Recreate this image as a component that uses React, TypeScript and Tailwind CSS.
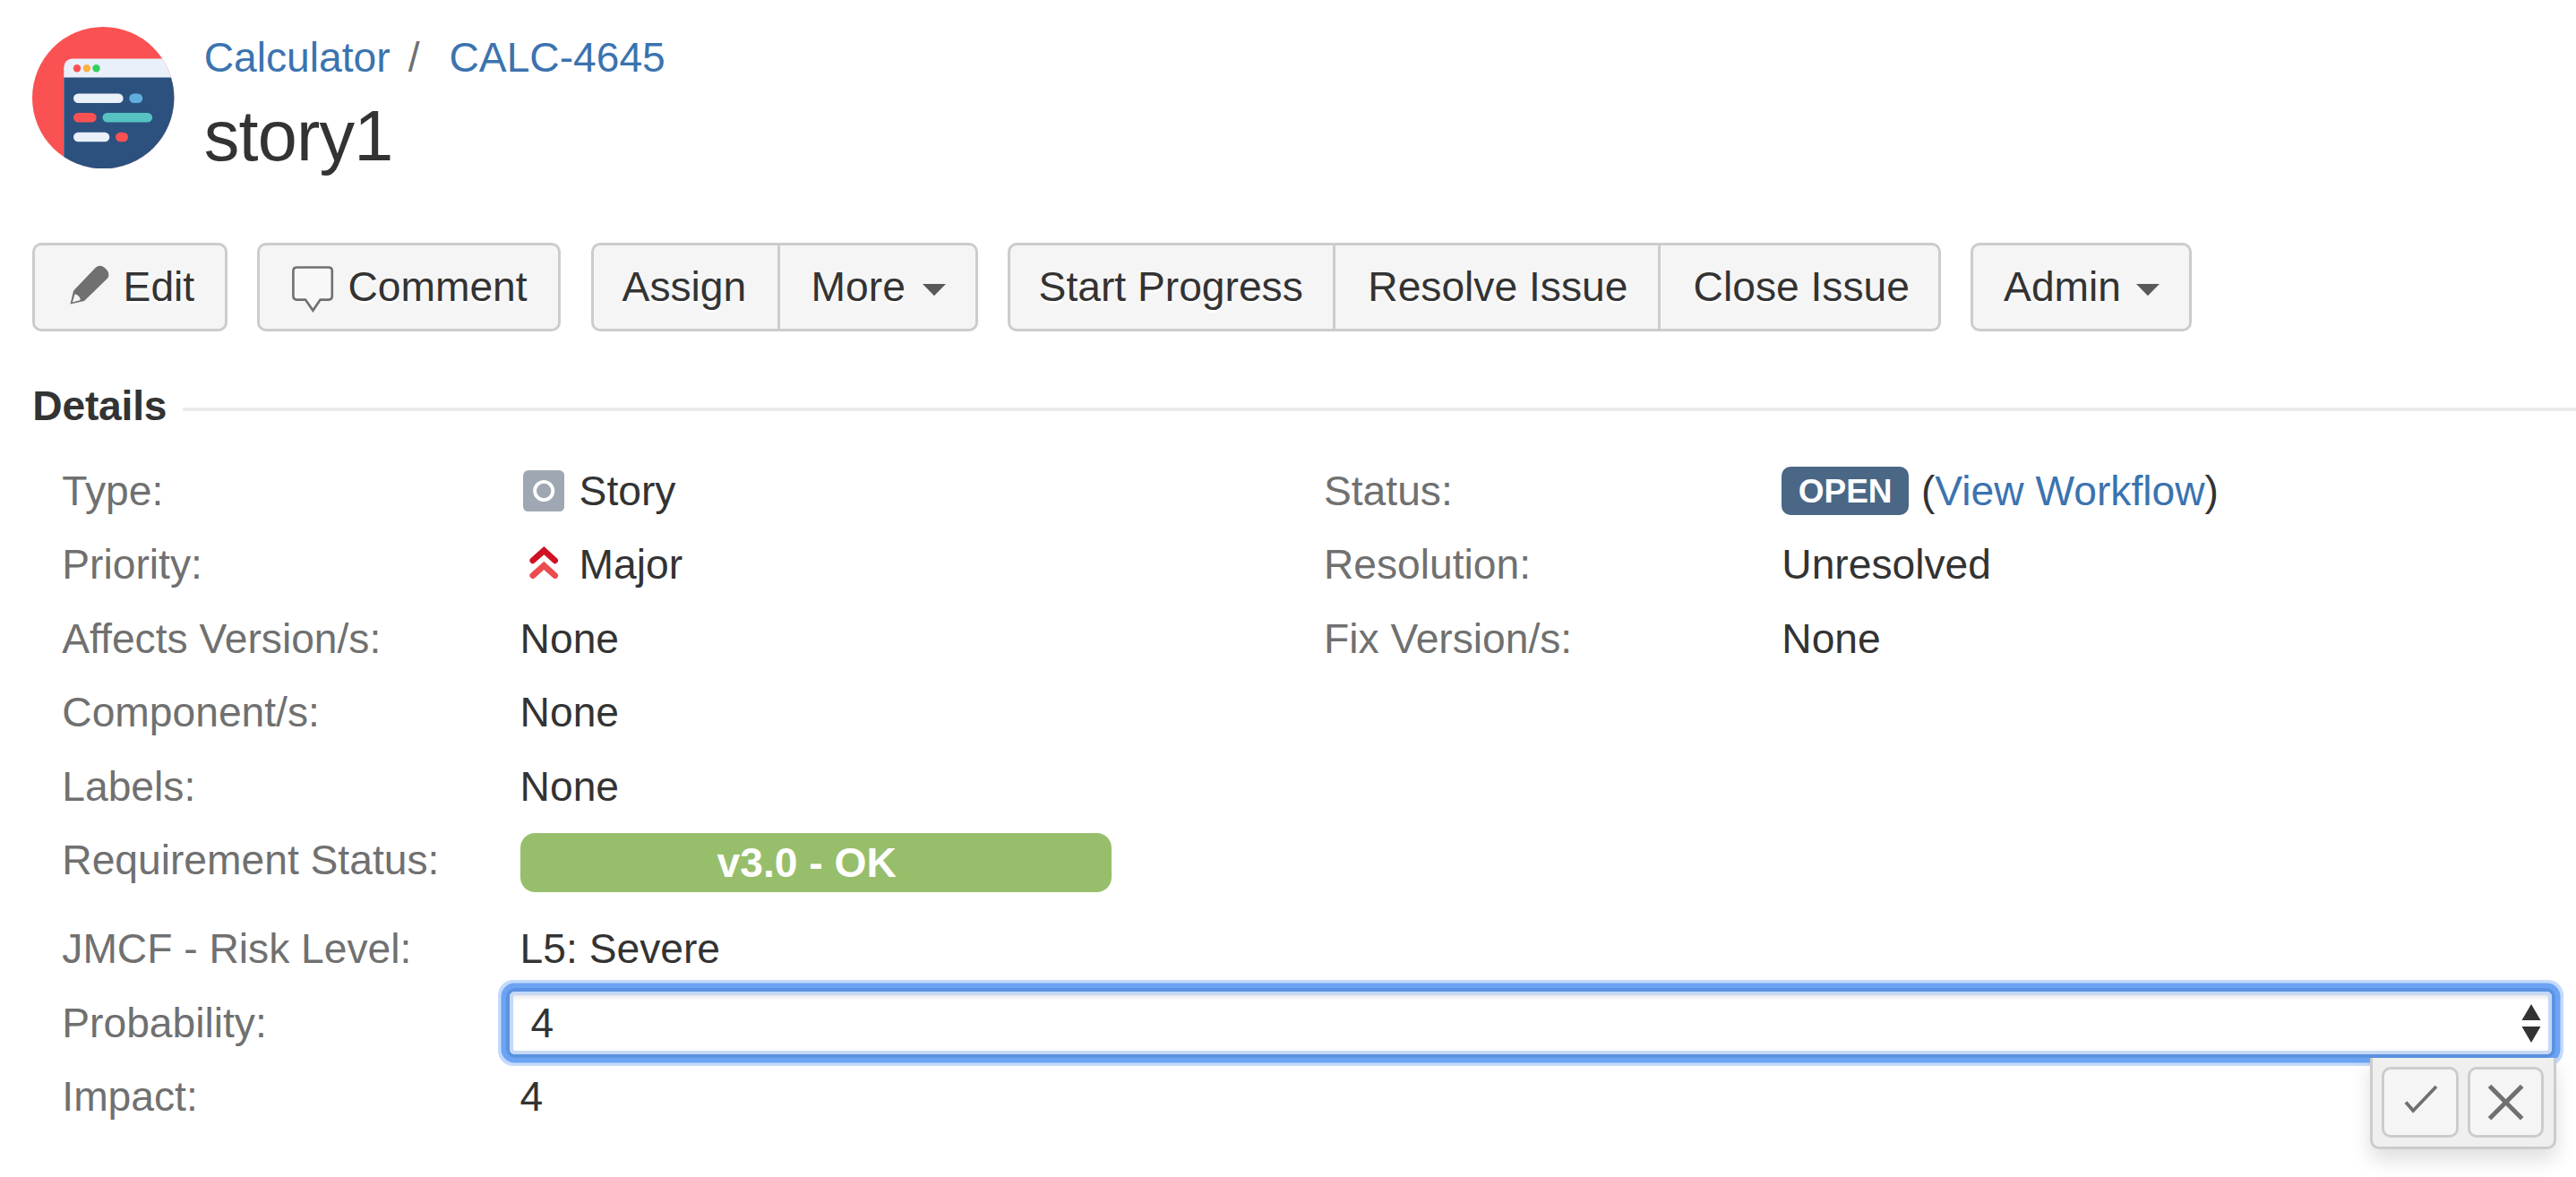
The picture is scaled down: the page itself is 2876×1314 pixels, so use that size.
import React from "react";

const Avatar = () => (
  <svg className="size-[158.4px] shrink-0" viewBox="0 0 158.4 158.4">
    <defs>
      <clipPath id="avatar-clip">
        <circle cx="79.2" cy="79.2" r="79.2" />
      </clipPath>
    </defs>
    <g clipPath="url(#avatar-clip)">
      <rect width="159" height="159" fill="#fa5252" />
      <path d="M35.3 159V45a9.5 9.5 0 0 1 9.5-9.5H160V159z" fill="#e9f0f9" />
      <rect x="35.3" y="56.5" width="125" height="104" fill="#2c517e" />
      <circle cx="50" cy="46.3" r="4.2" fill="#fa5252" />
      <circle cx="60.9" cy="46.3" r="4.2" fill="#fdb142" />
      <circle cx="71.5" cy="46.3" r="4.2" fill="#33d060" />
      <rect x="46" y="74.5" width="55.6" height="10.6" rx="5.3" fill="#e9f0f9" />
      <rect x="108.3" y="74.5" width="15" height="10.6" rx="5.3" fill="#61aede" />
      <rect x="46" y="96" width="25.7" height="10.6" rx="5.3" fill="#fa5252" />
      <rect x="78.5" y="96" width="55.6" height="10.6" rx="5.3" fill="#56c2c1" />
      <rect x="46" y="117.7" width="40.3" height="10.6" rx="5.3" fill="#e9f0f9" />
      <rect x="93" y="117.7" width="14" height="10.6" rx="5.3" fill="#fa5252" />
    </g>
  </svg>
);

const PencilIcon = () => (
  <svg className="mr-[12.5px] size-[52.8px] shrink-0" viewBox="0 0 52.8 52.8" fill="none">
    <path
      fill="#707070"
      fillRule="evenodd"
      d="M6.5 45.6L10.1 30.5L34.7 4.8Q39.7 0.8 45 5Q51.5 10.5 48.3 16.6L22 41.9L6.5 45.6ZM8.8 43.4L17.8 41Q17.3 36 11.6 34.2Z"
    />
  </svg>
);

const CommentIcon = () => (
  <svg
    className="mr-[12.5px] size-[52.8px] shrink-0 overflow-visible"
    viewBox="0 0 52.8 52.8"
    fill="none"
  >
    <path
      d="M8.4 4.5H43.8Q47.8 4.5 47.8 8.5V36.6Q47.8 40.6 43.8 40.6H34.6L26.4 52.6L18 40.6H8.4Q4.4 40.6 4.4 36.6V8.5Q4.4 4.5 8.4 4.5Z"
      stroke="#707070"
      strokeWidth="2.6"
      fill="#f8f8f8"
    />
  </svg>
);

const Caret = () => (
  <svg className="mt-[6px] h-[13.2px] w-[26px] shrink-0" viewBox="0 0 26 13.2">
    <path d="M0 0H26L13 13.2Z" fill="#595959" />
  </svg>
);

const cell =
  "flex h-full items-center whitespace-nowrap [text-shadow:0_3px_0_#fff]";
const group =
  "flex h-[99px] shrink-0 rounded-[10px] border-[3.3px] border-[#ccc] bg-[#f5f5f5]";

const Row = ({
  label,
  children,
  tall,
}: {
  label: string;
  children?: React.ReactNode;
  tall?: boolean;
}) => (
  <div className={tall ? "flex h-[99px] items-start" : "flex h-[82.5px] items-start"}>
    <div className="w-[511.3px] shrink-0 whitespace-nowrap leading-[82.5px] text-[#707070]">
      {label}
    </div>
    <div className="flex h-[82.5px] min-w-0 flex-1 items-center whitespace-nowrap leading-[82.5px]">
      {children}
    </div>
  </div>
);

const StoryIcon = () => (
  <svg className="ml-[3.3px] mr-[16.5px] size-[46.2px] shrink-0" viewBox="0 0 46.2 46.2">
    <rect width="46.2" height="46.2" rx="6" fill="#9fa8b2" />
    <circle cx="23.2" cy="23" r="10.1" fill="none" stroke="#fff" strokeWidth="3.8" />
  </svg>
);

const MajorIcon = () => (
  <svg
    className="mr-[13.2px] size-[52.8px] shrink-0"
    viewBox="0 0 52.8 52.8"
    fill="none"
    strokeWidth="6.8"
    strokeLinecap="round"
  >
    <path d="M13.8 21.8L26.3 10.6L38.6 21.8" stroke="#cf1124" />
    <path d="M13.8 38.6L26.3 27.4L38.6 38.6" stroke="#ea4c50" />
  </svg>
);

const iconButton =
  "flex h-[79px] w-[85.6px] items-center justify-center rounded-[10px] border-[3.3px] border-[#ccc] bg-[#f5f5f5]";

const Probability = () => (
  <div className="relative -ml-[11.6px] flex h-[70px] w-[2279.7px] shrink-0 items-center justify-between rounded-[6px] bg-white pl-[23.5px] pr-[11.7px] leading-none shadow-[inset_0_0_0_4px_#c5d9f6,inset_0_5px_6px_#ddd,0_0_0_4px_#5b92e2,0_0_0_9.5px_#6ca4f3,0_0_0_13px_#c5dafa]">
    <span>4</span>
    <svg className="h-[43px] w-[22px]" viewBox="0 0 22 43" fill="#333">
      <path d="M11 0L21.5 18H.5zM11 43L21.5 25H.5z" />
    </svg>
    <div className="absolute right-[-5px] top-[74px] flex h-[102px] w-[207.7px] gap-[10px] rounded-b-[10px] border-[3.3px] border-t-0 border-[#ccc] bg-[#efefef] pl-[10px] pt-[10px] shadow-[0_12px_22px_rgba(0,0,0,0.13)]">
      <div className={iconButton}>
        <svg className="size-[52.8px]" viewBox="0 0 52.8 52.8" fill="none" stroke="#707070" strokeWidth="3.8">
          <path d="M11 26.5L19.2 36L45 9" />
        </svg>
      </div>
      <div className={iconButton}>
        <svg className="size-[52.8px]" viewBox="0 0 52.8 52.8" fill="none" stroke="#707070" strokeWidth="5">
          <path d="M8.5 8.5L44.7 44.7M44.7 8.5L8.5 44.7" />
        </svg>
      </div>
    </div>
  </div>
);

export default function App() {
  return (
    <main className="h-[1314px] w-[2876px] overflow-hidden bg-white font-['Liberation_Sans',Arial,sans-serif] text-[46.2px] leading-none text-[#333]">
      <header className="flex h-[271px] pl-[36.3px] pt-[30px]">
        <Avatar />
        <div className="ml-[33px]">
          <nav className="flex h-[68px] items-center whitespace-nowrap text-[#3b73af]">
            <span>Calculator</span>
            <span className="ml-[20px] text-[#707070]">/</span>
            <span className="ml-[33px]">CALC-4645</span>
          </nav>
          <h1 className="h-[108px] text-[79.2px] leading-[108px] tracking-[-0.01em]">story1</h1>
        </div>
      </header>

      <div className="flex pl-[36.3px]">
        <div className={group + " w-[217.8px] pl-[33px]"}>
          <div className={cell}>
            <PencilIcon />
            Edit
          </div>
        </div>
        <div className={group + " ml-[33px] w-[339px] pl-[33px]"}>
          <div className={cell}>
            <CommentIcon />
            Comment
          </div>
        </div>
        <div className={group + " ml-[33.5px] w-[432px]"}>
          <div className={cell + " w-[208px] border-r-[3.3px] border-[#ccc] pl-[32px]"}>Assign</div>
          <div className={cell + " gap-[19px] pl-[35px]"}>
            More
            <Caret />
          </div>
        </div>
        <div className={group + " ml-[33px] w-[1042px]"}>
          <div className={cell + " w-[363px] border-r-[3.3px] border-[#ccc] pl-[32px]"}>
            Start Progress
          </div>
          <div className={cell + " w-[363.5px] border-r-[3.3px] border-[#ccc] pl-[36.7px]"}>
            Resolve Issue
          </div>
          <div className={cell + " pl-[36.5px]"}>Close Issue</div>
        </div>
        <div className={group + " ml-[33.5px] w-[247px] pl-[34px]"}>
          <div className={cell + " gap-[16.5px]"}>
            Admin
            <Caret />
          </div>
        </div>
      </div>

      <section>
        <div className="flex h-[136.8px] items-start pl-[36.3px] pt-[53px]">
          <h2 className="w-[168px] text-[46.2px] font-bold leading-[60px] tracking-[-0.2px]">Details</h2>
          <div className="mt-[32px] h-[4px] flex-1 bg-[#ebebeb]" />
        </div>
        <div className="flex pl-[69.3px]">
          <div className="w-[1408.7px]">
            <Row label="Type:">
              <StoryIcon />
              Story
            </Row>
            <Row label="Priority:">
              <MajorIcon />
              Major
            </Row>
            <Row label="Affects Version/s:">None</Row>
            <Row label="Component/s:">None</Row>
            <Row label="Labels:">None</Row>
            <Row label="Requirement Status:" tall>
              <div className="mt-[5px] h-[66px] w-[660px] rounded-[16.5px] bg-[#97be6b] pl-[220px] font-bold leading-[66px] text-white">
                v3.0 - OK
              </div>
            </Row>
            <Row label="JMCF - Risk Level:">L5: Severe</Row>
            <Row label="Probability:">
              <Probability />
            </Row>
            <Row label="Impact:">4</Row>
          </div>
          <div className="flex-1">
            <Row label="Status:">
              <span className="flex h-[53.4px] w-[141.7px] items-center justify-center rounded-[10px] bg-[#4a6785] text-[37px] font-bold leading-none text-white">
                OPEN
              </span>
              <span className="ml-[14px]">
                (<span className="text-[#3b73af]">View Workflow</span>)
              </span>
            </Row>
            <Row label="Resolution:">Unresolved</Row>
            <Row label="Fix Version/s:">None</Row>
          </div>
        </div>
      </section>
    </main>
  );
}
